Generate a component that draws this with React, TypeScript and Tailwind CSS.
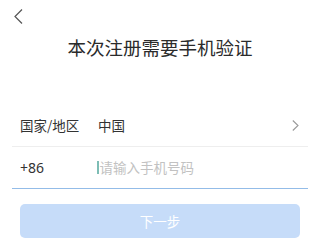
export default function App() {
  return (
    <div className="w-[320px] h-[248px] overflow-hidden bg-white font-['Noto_Sans_CJK_SC','Noto_Sans',sans-serif] text-[#333]">
      {/* header */}
      <div className="h-[34px] pl-[14px] pt-[9px]">
        <svg width="9" height="15" viewBox="0 0 9 15" fill="none">
          <polyline points="8,0.5 1,7.5 8,14.5" stroke="#555" strokeWidth="1.2" />
        </svg>
      </div>

      <h1 className="text-center text-[18.5px] leading-[26px] text-[#2b2b2b]">本次注册需要手机验证</h1>

      <div className="mt-[45px] mx-3">
        {/* country row */}
        <div className="h-[42px] flex items-center pl-2 pr-[9px] border-b border-[#eeeeee]">
          <span className="w-[78px] text-[13.5px]">国家/地区</span>
          <span className="flex-1 text-[13.5px]">中国</span>
          <svg width="7" height="11" viewBox="0 0 7 11" fill="none">
            <polyline points="0.8,0.5 6,5.5 0.8,10.5" stroke="#9a9a9a" strokeWidth="1.1" />
          </svg>
        </div>

        {/* phone row */}
        <div className="h-[42px] flex items-center pl-2 border-b border-[#93bce8]">
          <span className="w-[77px] text-[14px] font-['Noto_Sans',sans-serif]">+86</span>
          <div className="flex items-center">
            <span className="w-[1.5px] h-[13px] bg-[#7dbdb5] mr-[1px]" />
            <span className="text-[13.5px] text-[#c2c2c2]">请输入手机号码</span>
          </div>
        </div>
      </div>

      <div className="mt-[15px] mx-5">
        <button className="w-full h-[34px] rounded-[5px] bg-[#c6dcf9] text-white text-[13.5px]">下一步</button>
      </div>
    </div>
  )
}
